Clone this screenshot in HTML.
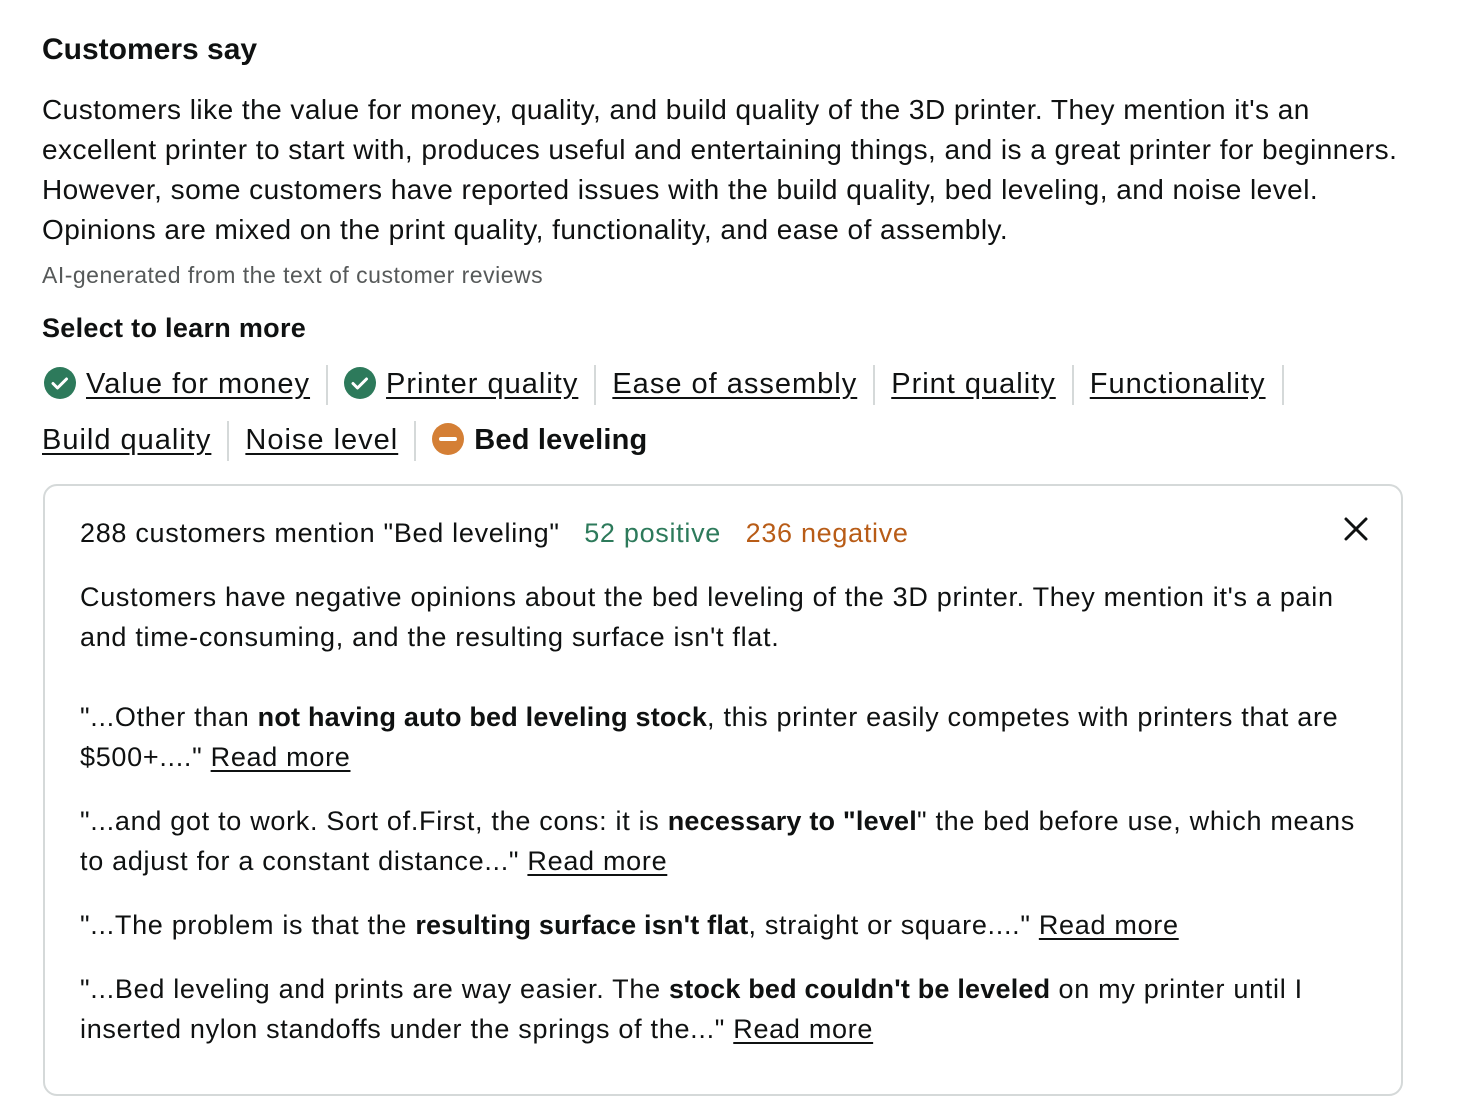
<!DOCTYPE html>
<html><head><meta charset="utf-8"><style>
body{margin:0;width:1458px;height:1114px;background:#fff;font-family:"Liberation Sans",sans-serif;color:#0f1111;position:relative;overflow:hidden}
.l{position:absolute;white-space:nowrap;font-size:28px;letter-spacing:0.46px;line-height:40px;left:42px}
.in{left:80px;font-size:27px;letter-spacing:0.7px}
a{color:#0f1111;text-decoration:underline;text-underline-offset:4px}
b{font-weight:bold;letter-spacing:0.2px}
.sep{display:inline-block;width:2px;height:40px;background:#d5d9d9;vertical-align:middle;margin:0 16px}
.ic{display:inline-block;width:32px;height:32px;vertical-align:middle;margin-right:10px;position:relative;top:-2px}
.box{position:absolute;left:43px;top:484px;width:1356px;height:608px;border:2px solid #d5d9d9;border-radius:14px}
.chips{font-size:29px;letter-spacing:1px}
</style></head><body>
<div class="l" style="top:30px;font-size:30px;font-weight:bold;letter-spacing:0">Customers say</div>
<div class="l" style="top:90px">Customers like the value for money, quality, and build quality of the 3D printer. They mention it's an</div>
<div class="l" style="top:130px">excellent printer to start with, produces useful and entertaining things, and is a great printer for beginners.</div>
<div class="l" style="top:170px">However, some customers have reported issues with the build quality, bed leveling, and noise level.</div>
<div class="l" style="top:210px">Opinions are mixed on the print quality, functionality, and ease of assembly.</div>
<div class="l" style="top:258px;font-size:23px;letter-spacing:0.5px;line-height:34px;color:#565959">AI-generated from the text of customer reviews</div>
<div class="l" style="top:308px;font-size:27px;letter-spacing:0.3px;font-weight:bold">Select to learn more</div>
<div class="l chips" style="top:364px"><span style="margin-left:2px"></span><svg class="ic" viewBox="0 0 32 32"><circle cx="16" cy="16" r="16" fill="#2d7a5b"/><path d="M9 16.5l4.5 4.5 9-9" stroke="#fff" stroke-width="3" fill="none" stroke-linecap="round" stroke-linejoin="round"/></svg><a>Value for money</a><span class="sep"></span><svg class="ic" viewBox="0 0 32 32"><circle cx="16" cy="16" r="16" fill="#2d7a5b"/><path d="M9 16.5l4.5 4.5 9-9" stroke="#fff" stroke-width="3" fill="none" stroke-linecap="round" stroke-linejoin="round"/></svg><a>Printer quality</a><span class="sep"></span><a>Ease of assembly</a><span class="sep"></span><a>Print quality</a><span class="sep"></span><a>Functionality</a><span class="sep"></span></div>
<div class="l chips" style="top:420px"><a>Build quality</a><span class="sep"></span><a>Noise level</a><span class="sep"></span><svg class="ic" viewBox="0 0 32 32"><circle cx="16" cy="16" r="16" fill="#d47f35"/><rect x="7" y="14" width="18" height="4" rx="2" fill="#fff"/></svg><b>Bed leveling</b></div>
<div class="box"></div>
<div class="l in" style="top:513px">288 customers mention "Bed leveling" &nbsp;&nbsp;<span style="color:#2d7a5b">52 positive</span> &nbsp;&nbsp;<span style="color:#b85c17">236 negative</span></div>
<svg style="position:absolute;left:1343px;top:516px" width="26" height="26" viewBox="0 0 26 26"><path d="M3 3l20 20M23 3L3 23" stroke="#0f1111" stroke-width="3" stroke-linecap="round"/></svg>
<div class="l in" style="top:577px">Customers have negative opinions about the bed leveling of the 3D printer. They mention it's a pain</div>
<div class="l in" style="top:617px">and time-consuming, and the resulting surface isn't flat.</div>
<div class="l in" style="top:697px">"...Other than <b>not having auto bed leveling stock</b>, this printer easily competes with printers that are</div>
<div class="l in" style="top:737px">$500+...." <a>Read more</a></div>
<div class="l in" style="top:801px">"...and got to work. Sort of.First, the cons: it is <b>necessary to "level</b>" the bed before use, which means</div>
<div class="l in" style="top:841px">to adjust for a constant distance..." <a>Read more</a></div>
<div class="l in" style="top:905px">"...The problem is that the <b>resulting surface isn't flat</b>, straight or square...." <a>Read more</a></div>
<div class="l in" style="top:969px">"...Bed leveling and prints are way easier. The <b>stock bed couldn't be leveled</b> on my printer until I</div>
<div class="l in" style="top:1009px">inserted nylon standoffs under the springs of the..." <a>Read more</a></div>
</body></html>
